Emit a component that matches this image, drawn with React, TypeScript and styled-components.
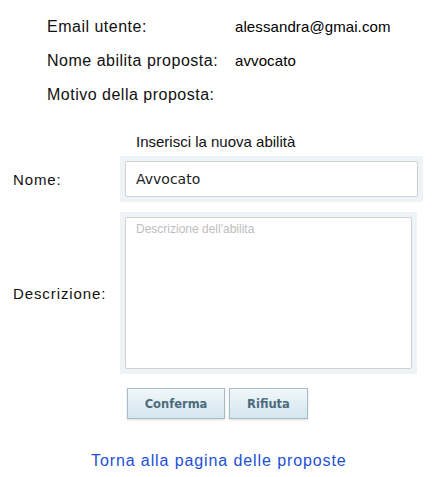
import React from "react";
import styled, { createGlobalStyle } from "styled-components";

const Global = createGlobalStyle`
  html, body { margin: 0; padding: 0; background: #ffffff; }
  body { font-family: "Liberation Sans", "DejaVu Sans", sans-serif; color: #111; }
`;

const Page = styled.div`
  width: 436px;
  padding-top: 10px;
  box-sizing: border-box;
`;

const InfoTable = styled.div`
  display: grid;
  grid-template-columns: 188px auto;
  grid-auto-rows: 34px;
  padding-left: 47px;
  line-height: 34px;
`;

const InfoLabel = styled.div`
  color: #111;
  font-size: 16px;
  letter-spacing: 0.5px;
`;

const InfoValue = styled.div`
  color: #000;
  font-size: 15px;
  letter-spacing: 0.1px;
`;

const FormGrid = styled.div`
  margin-top: 20px;
  display: grid;
  grid-template-columns: 120px auto;
  row-gap: 10px;
  align-items: center;
`;

const FormTitle = styled.div`
  grid-column: 2;
  padding-left: 16px;
  font-size: 15px;
  height: 20px;
  line-height: 20px;
  margin-bottom: -6px;
`;

const FieldLabel = styled.div`
  padding-left: 13px;
  font-size: 15px;
  letter-spacing: 0.9px;
`;

const FieldWrap = styled.div<{ $w: number }>`
  width: ${(p) => p.$w}px;
  box-sizing: border-box;
  background: #eef3f6;
  padding: 5px;
`;

const TextInput = styled.input`
  display: block;
  width: 100%;
  height: 36px;
  box-sizing: border-box;
  border: 1px solid #cfd2d4;
  border-radius: 2px;
  padding: 0 10px;
  font-family: "DejaVu Sans", sans-serif;
  font-size: 14px;
  color: #222;
  background: #fff;
  outline: none;
`;

const TextArea = styled.textarea`
  display: block;
  width: 100%;
  height: 152px;
  box-sizing: border-box;
  border: 1px solid #cfd2d4;
  border-radius: 2px;
  padding: 4px 10px;
  font-family: "Liberation Sans", sans-serif;
  font-size: 12px;
  color: #222;
  background: #fff;
  resize: none;
  outline: none;
  &::placeholder { color: #bdbdbd; }
`;

const ButtonRow = styled.div`
  grid-column: 2;
  display: flex;
  gap: 4px;
  padding-left: 7px;
  margin-top: 4px;
`;

const Button = styled.button<{ $w: number }>`
  width: ${(p) => p.$w}px;
  height: 31px;
  border: 1px solid #a8bcc8;
  background: linear-gradient(#f1f7fa, #d3e6f0);
  box-shadow: 0 1px 2px rgba(0, 0, 0, 0.15);
  font-family: "DejaVu Sans", sans-serif;
  font-weight: bold;
  font-size: 11.5px;
  color: #4d6b7c;
  padding: 0;
`;

const LinkRow = styled.div`
  margin-top: 33px;
  padding-left: 91px;
`;

const BackLink = styled.a`
  color: #1d4fd8;
  text-decoration: none;
  font-size: 16px;
  letter-spacing: 0.9px;
`;

export default function App() {
  return (
    <Page>
      <Global />
      <InfoTable>
        <InfoLabel>Email utente:</InfoLabel>
        <InfoValue>alessandra@gmai.com</InfoValue>
        <InfoLabel>Nome abilita proposta:</InfoLabel>
        <InfoValue>avvocato</InfoValue>
        <InfoLabel>Motivo della proposta:</InfoLabel>
        <InfoValue></InfoValue>
      </InfoTable>
      <FormGrid>
        <FormTitle>Inserisci la nuova abilità</FormTitle>
        <FieldLabel>Nome:</FieldLabel>
        <FieldWrap $w={303}>
          <TextInput defaultValue="Avvocato" />
        </FieldWrap>
        <FieldLabel>Descrizione:</FieldLabel>
        <FieldWrap $w={297}>
          <TextArea placeholder="Descrizione dell'abilita" />
        </FieldWrap>
        <ButtonRow>
          <Button $w={98}>Conferma</Button>
          <Button $w={79}>Rifiuta</Button>
        </ButtonRow>
      </FormGrid>
      <LinkRow>
        <BackLink href="#">Torna alla pagina delle proposte</BackLink>
      </LinkRow>
    </Page>
  );
}
